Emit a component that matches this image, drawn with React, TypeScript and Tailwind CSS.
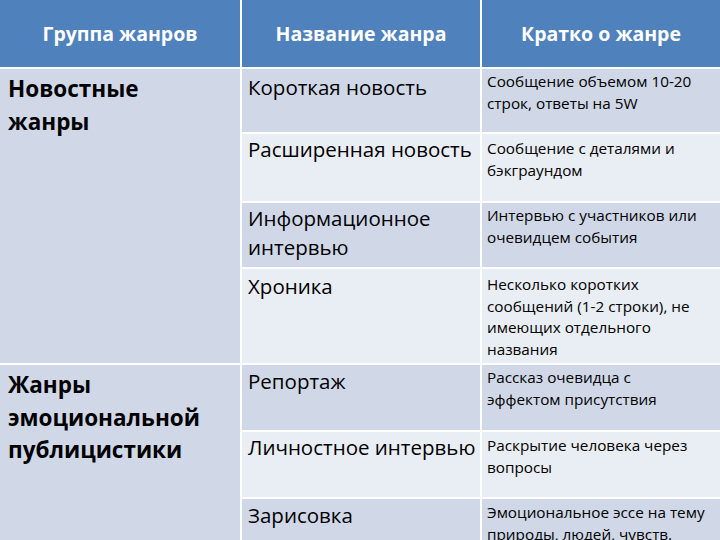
import React from 'react';

const font = { fontFamily: '"Open Sans", "Liberation Sans", sans-serif' };

const Lines = ({ lines }: { lines: string[] }) => (
  <>
    {lines.map((l) => (
      <span key={l} className="block whitespace-nowrap">
        {l}
      </span>
    ))}
  </>
);

const App = () => {
  return (
    <div style={font} className="w-[720px] h-[540px] overflow-hidden bg-white">
      <div className="grid grid-cols-[240px_238px_238px] grid-rows-[67px_63px_67px_64px_94px_65px_65px_80px] gap-[2px] bg-white text-black">
        {/* Header */}
        <div className="bg-[#4f81bd] text-white font-bold text-[19.5px] flex items-center justify-center">
          Группа жанров
        </div>
        <div className="bg-[#4f81bd] text-white font-bold text-[19.5px] flex items-center justify-center">
          Название жанра
        </div>
        <div className="bg-[#4f81bd] text-white font-bold text-[19.5px] flex items-center justify-center">
          Кратко о жанре
        </div>

        {/* Новостные жанры */}
        <div className="row-span-4 bg-[#d0d8e8] px-2 pt-[3px] font-bold text-[22.5px] leading-[33px]">
          <Lines lines={['Новостные', 'жанры']} />
        </div>
        <div className="bg-[#d0d8e8] pl-[6px] pt-[4px] text-[20.5px] leading-[29px]">Короткая новость</div>
        <div className="bg-[#d0d8e8] pl-[5px] pt-[1px] text-[15.3px] leading-[22px]">
          <Lines lines={['Сообщение объемом 10-20', 'строк, ответы на 5W']} />
        </div>

        <div className="bg-[#e9edf4] pl-[6px] pt-[1px] text-[20.5px] leading-[29px] whitespace-nowrap">Расширенная новость</div>
        <div className="bg-[#e9edf4] pl-[5px] pt-[3px] text-[15.3px] leading-[22px]">
          <Lines lines={['Сообщение с деталями и', 'бэкграундом']} />
        </div>

        <div className="bg-[#d0d8e8] pl-[6px] pt-[1px] text-[20.5px] leading-[29px]">
          <Lines lines={['Информационное', 'интервью']} />
        </div>
        <div className="bg-[#d0d8e8] pl-[5px] pt-[1px] text-[15.3px] leading-[22px]">
          <Lines lines={['Интервью с участников или', 'очевидцем события']} />
        </div>

        <div className="bg-[#e9edf4] pl-[6px] pt-[3px] text-[20.5px] leading-[29px]">Хроника</div>
        <div className="bg-[#e9edf4] pl-[5px] pt-[5px] text-[15.3px] leading-[21.5px]">
          <Lines lines={['Несколько коротких', 'сообщений (1-2 строки), не', 'имеющих отдельного', 'названия']} />
        </div>

        {/* Жанры эмоциональной публицистики */}
        <div className="row-span-3 bg-[#d0d8e8] px-2 pt-[4px] font-bold text-[22.5px] leading-[32.5px]">
          <Lines lines={['Жанры', 'эмоциональной', 'публицистики']} />
        </div>
        <div className="bg-[#d0d8e8] pl-[6px] pt-[2px] text-[20.5px] leading-[29px]">Репортаж</div>
        <div className="bg-[#d0d8e8] pl-[5px] pt-[1px] text-[15.3px] leading-[22px]">
          <Lines lines={['Рассказ очевидца с', 'эффектом присутствия']} />
        </div>

        <div className="bg-[#e9edf4] pl-[6px] pt-[1px] text-[20.5px] leading-[29px] whitespace-nowrap">Личностное интервью</div>
        <div className="bg-[#e9edf4] pl-[5px] pt-[2px] text-[15.3px] leading-[22px]">
          <Lines lines={['Раскрытие человека через', 'вопросы']} />
        </div>

        <div className="bg-[#d0d8e8] pl-[6px] pt-[2px] text-[20.5px] leading-[29px]">Зарисовка</div>
        <div className="bg-[#d0d8e8] pl-[5px] pt-[2px] text-[15.3px] leading-[22px]">
          <Lines lines={['Эмоциональное эссе на тему', 'природы, людей, чувств.']} />
        </div>
      </div>
    </div>
  );
};

export default App;
